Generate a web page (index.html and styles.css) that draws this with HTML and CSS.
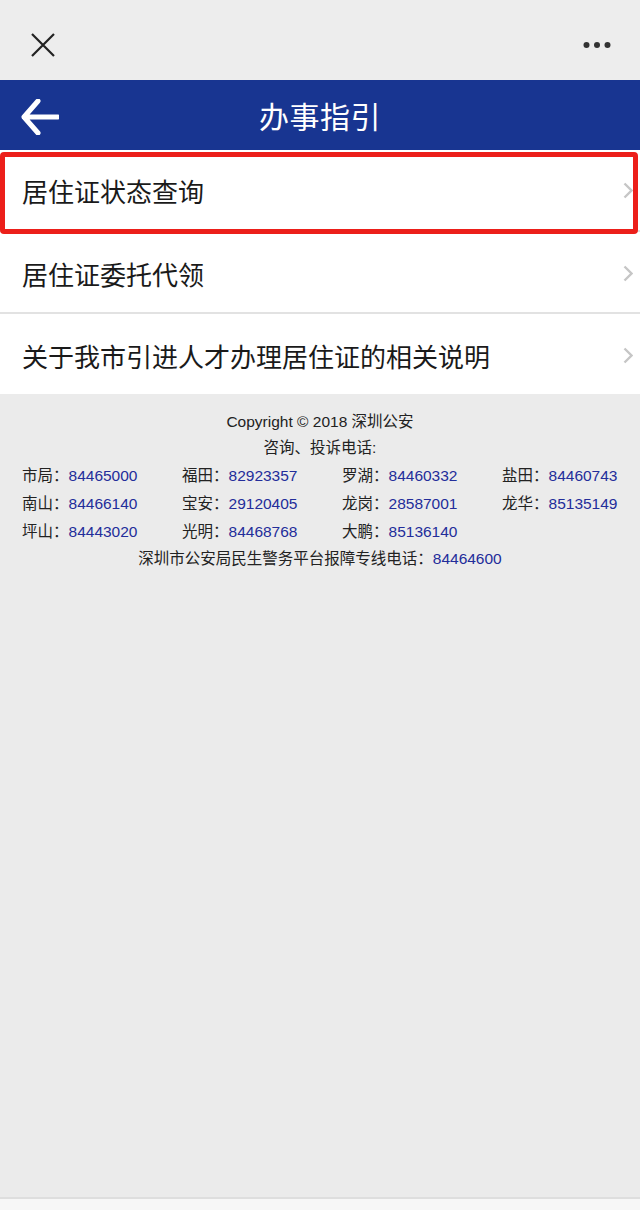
FILE: index.html
```html
<!DOCTYPE html>
<html lang="zh-CN">
<head>
<meta charset="utf-8">
<title>办事指引</title>
<link rel="stylesheet" href="styles.css">
</head>
<body>
<div class="page">
  <div class="topbar">
    <svg class="close" width="24" height="24" viewBox="0 0 24 24"><path d="M1 1 L23 23 M23 1 L1 23" stroke="#222" stroke-width="2.2" fill="none"/></svg>
    <svg class="more" width="28" height="8" viewBox="0 0 28 8"><circle cx="3.5" cy="4" r="3"/><circle cx="14" cy="4" r="3"/><circle cx="24.5" cy="4" r="3"/></svg>
  </div>
  <header class="header">
    <svg class="back" width="38" height="36" viewBox="0 0 38 36"><path d="M17 2 L3 18 L17 34 M3 18 L37 18" stroke="#fff" stroke-width="5" fill="none" stroke-linecap="round" stroke-linejoin="round"/></svg>
    <h1 class="title">办事指引</h1>
  </header>
  <ul class="list">
    <li class="item item-marked"><span class="label">居住证状态查询</span><svg class="chev" width="10" height="17" viewBox="0 0 10 17"><path d="M1.5 1.5 L8.5 8.5 L1.5 15.5" stroke="#c6c6c6" stroke-width="2.4" fill="none"/></svg></li>
    <li class="item"><span class="label">居住证委托代领</span><svg class="chev" width="10" height="17" viewBox="0 0 10 17"><path d="M1.5 1.5 L8.5 8.5 L1.5 15.5" stroke="#c6c6c6" stroke-width="2.4" fill="none"/></svg></li>
    <li class="item"><span class="label">关于我市引进人才办理居住证的相关说明</span><svg class="chev" width="10" height="17" viewBox="0 0 10 17"><path d="M1.5 1.5 L8.5 8.5 L1.5 15.5" stroke="#c6c6c6" stroke-width="2.4" fill="none"/></svg></li>
  </ul>
  <footer class="footer">
    <p class="line">Copyright © 2018 深圳公安</p>
    <p class="line">咨询、投诉电话:</p>
    <div class="phones">
      <span>市局：<a>84465000</a></span>
      <span>福田：<a>82923357</a></span>
      <span>罗湖：<a>84460332</a></span>
      <span>盐田：<a>84460743</a></span>
      <span>南山：<a>84466140</a></span>
      <span>宝安：<a>29120405</a></span>
      <span>龙岗：<a>28587001</a></span>
      <span>龙华：<a>85135149</a></span>
      <span>坪山：<a>84443020</a></span>
      <span>光明：<a>84468768</a></span>
      <span>大鹏：<a>85136140</a></span>
    </div>
    <p class="line">深圳市公安局民生警务平台报障专线电话：<a>84464600</a></p>
  </footer>
  <div class="spacer"></div>
  <div class="bottombar"></div>
</div>
</body>
</html>
```
FILE: styles.css
```css
* { box-sizing: border-box; }
html, body { margin: 0; padding: 0; }
body {
  font-family: "Liberation Sans", "Noto Sans CJK SC", sans-serif;
  background: #ebebeb;
  color: #222;
}
.page {
  min-height: 1210px;
  display: flex;
  flex-direction: column;
}
.topbar {
  height: 80px;
  background: #ededed;
  display: flex;
  align-items: center;
  justify-content: space-between;
  padding: 10px 29px 0 31px;
}
.close { display: block; }
.more { display: block; fill: #333; }
.header {
  height: 70px;
  background: #183591;
  display: flex;
  align-items: center;
  justify-content: center;
  position: relative;
}
.back { position: absolute; left: 21px; top: 19px; }
.title {
  margin: 0;
  color: #fff;
  font-family: "Noto Sans CJK SC", sans-serif;
  font-weight: 400;
  font-size: 30px;
  letter-spacing: 0.5px;
}
.list {
  list-style: none;
  margin: 0;
  padding: 0;
  background: #fff;
}
.item {
  height: 82px;
  display: flex;
  align-items: center;
  justify-content: space-between;
  padding: 3px 7px 0 22px;
  border-bottom: 2px solid #e2e2e2;
  font-family: "Noto Sans CJK SC", sans-serif;
  font-size: 26px;
  color: #1a1a1a;
  position: relative;
}
.item:first-child { padding-top: 0; }
.item:last-child { border-bottom: none; height: 80px; }
.item-marked::after {
  content: "";
  position: absolute;
  left: 0;
  right: 2px;
  top: 2px;
  bottom: -4px;
  border: 5px solid #ec1f1a;
  border-radius: 4px;
}
.chev { display: block; }
.footer {
  padding: 15px 0 0;
  font-size: 15.5px;
  color: #222;
  font-family: "Liberation Sans", "Noto Sans CJK SC", sans-serif;
}
.line {
  margin: 0;
  text-align: center;
  line-height: 26px;
}
.phones {
  display: grid;
  grid-template-columns: repeat(4, 160px);
  padding-left: 22px;
  line-height: 28px;
  margin-top: 1px;
}
.footer a { color: #232d9a; }
.spacer { flex: 1; }
.bottombar {
  height: 13px;
  background: #f7f7f7;
  border-top: 2px solid #dedede;
}
```
